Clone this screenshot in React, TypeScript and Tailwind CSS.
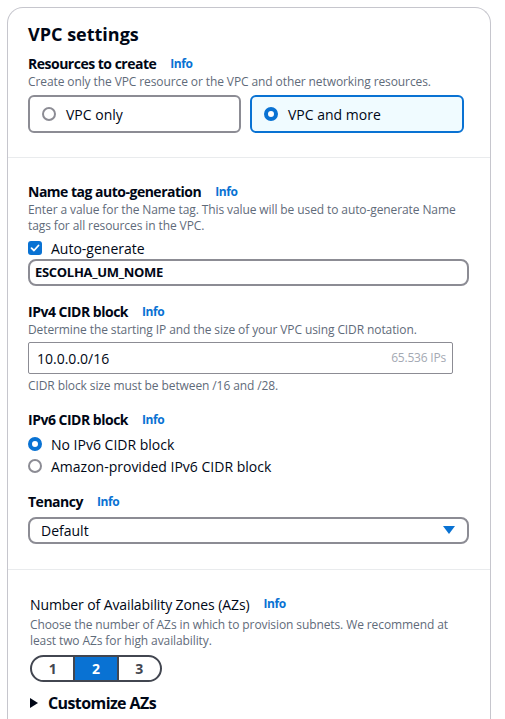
import React from 'react';

const FONT = { fontFamily: '"Open Sans", "Noto Sans", Arial, sans-serif' };

function Info() {
  return <span className="ml-[14px] text-[12px] font-bold tracking-[-0.4px] text-[#0972d3]">Info</span>;
}

function Label({ children }: { children: React.ReactNode }) {
  return (
    <div className="flex items-center h-5 text-[14px] font-bold tracking-[-0.5px] leading-5 text-[#000716]">
      {children}
      <Info />
    </div>
  );
}

function Desc({ children }: { children: React.ReactNode }) {
  return <div className="text-[12px] leading-4 tracking-[-0.1px] text-[#5f6b7a]">{children}</div>;
}

function Radio({ checked }: { checked?: boolean }) {
  return checked ? (
    <span className="block w-[14px] h-[14px] rounded-full border-[4px] border-[#0972d3] bg-white shrink-0" />
  ) : (
    <span className="block w-[14px] h-[14px] rounded-full border-2 border-[#8c8c94] bg-white shrink-0" />
  );
}

function RadioRow({ checked, label }: { checked?: boolean; label: string }) {
  return (
    <div className="flex items-center gap-[9px] h-5 text-[14px] text-[#000716]">
      <Radio checked={checked} />
      {label}
    </div>
  );
}

export default function App() {
  return (
    <div className="min-h-screen bg-white pl-[7px] pt-[7px] overflow-hidden" style={FONT}>
      <div className="w-[484px] h-[720px] border border-b-0 border-[#c6c6cd] rounded-t-2xl">
        {/* Header + resources */}
        <div className="px-5 pt-[14px] pb-6 border-b border-[#e9ebed]">
          <h2 className="text-[18px] font-bold leading-6 text-[#000716]">VPC settings</h2>
          <div className="mt-2">
            <Label>Resources to create</Label>
          </div>
          <Desc>Create only the VPC resource or the VPC and other networking resources.</Desc>
          <div className="mt-[5px] flex gap-[9px]">
            <div className="w-[213px] h-[38px] flex items-center gap-[10px] px-[12px] border-2 border-[#8c8c94] rounded-md text-[14px] text-[#000716]">
              <Radio />
              VPC only
            </div>
            <div className="w-[214px] h-[38px] flex items-center gap-[10px] px-[12px] border-2 border-[#0972d3] bg-[#f0fbff] rounded-md text-[14px] text-[#000716]">
              <Radio checked />
              VPC and more
            </div>
          </div>
        </div>

        {/* Main fields */}
        <div className="px-5 pt-6 pb-[25px] border-b border-[#e9ebed]">
          <Label>Name tag auto-generation</Label>
          <Desc>
            Enter a value for the Name tag. This value will be used to auto-generate Name
            <br />
            tags for all resources in the VPC.
          </Desc>
          <div className="mt-1 flex items-center gap-[9px] h-5 text-[14px] text-[#000716]">
            <span className="w-[14px] h-[14px] rounded-[3px] bg-[#0972d3] flex items-center justify-center">
              <svg width="10" height="10" viewBox="0 0 10 10" fill="none">
                <path d="M1.5 5.2 L4 7.5 L8.5 2.5" stroke="white" strokeWidth="1.8" strokeLinecap="round" strokeLinejoin="round" />
              </svg>
            </span>
            Auto-generate
          </div>
          <div className="mt-[1px] w-[441px] h-[27px] border-2 border-[#8c8c94] rounded-lg flex items-center px-[5px] text-[13px] font-bold tracking-[-0.3px] text-[#000716]">
            ESCOLHA_UM_NOME
          </div>

          <div className="mt-4">
            <Label>IPv4 CIDR block</Label>
          </div>
          <Desc>Determine the starting IP and the size of your VPC using CIDR notation.</Desc>
          <div className="mt-1 w-[425px] h-[32px] border border-[#8c8c94] rounded-[2px] flex items-center justify-between pl-[8px] pr-[6px]">
            <span className="text-[14px] text-[#000716]">10.0.0.0/16</span>
            <span className="text-[12px] tracking-[-0.2px] text-[#a4a9b3]">65.536 IPs</span>
          </div>
          <div className="mt-1">
            <Desc>CIDR block size must be between /16 and /28.</Desc>
          </div>

          <div className="mt-4">
            <Label>IPv6 CIDR block</Label>
          </div>
          <div className="mt-1 flex flex-col gap-[2px]">
            <RadioRow checked label="No IPv6 CIDR block" />
            <RadioRow label="Amazon-provided IPv6 CIDR block" />
          </div>

          <div className="mt-4">
            <Label>Tenancy</Label>
          </div>
          <div className="mt-[5px] w-[441px] h-[27px] border-2 border-[#8c8c94] rounded-lg flex items-center justify-between pl-[11px] pr-[12px] text-[14px] text-[#000716]">
            Default
            <svg width="12" height="9" viewBox="0 0 12 9">
              <path d="M0 0 H12 L6 8 Z" fill="#0972d3" />
            </svg>
          </div>
        </div>

        {/* AZs */}
        <div className="pl-[22px] pr-5 pt-6">
          <div className="flex items-center h-5 text-[14px] tracking-[-0.1px] text-[#000716]">
            Number of Availability Zones (AZs)
            <Info />
          </div>
          <div className="mt-[3px]">
            <Desc>
              Choose the number of AZs in which to provision subnets. We recommend at
              <br />
              least two AZs for high availability.
            </Desc>
          </div>
          <div className="mt-[6px] w-[132px] h-[27px] flex border-2 border-[#424650] rounded-full overflow-hidden text-[14px] font-bold">
            <div className="flex-1 flex items-center justify-center text-[#424650] border-r-2 border-[#424650]">1</div>
            <div className="flex-1 flex items-center justify-center bg-[#0972d3] text-white">2</div>
            <div className="flex-1 flex items-center justify-center text-[#424650] border-l-2 border-[#424650]">3</div>
          </div>
          <div className="mt-[10px] flex items-center gap-[10px] h-[22px] text-[16px] font-bold tracking-[-0.6px] text-[#000716]">
            <svg width="8" height="10" viewBox="0 0 8 10">
              <path d="M0 0 L8 5 L0 10 Z" fill="#000716" />
            </svg>
            Customize AZs
          </div>
        </div>
      </div>
    </div>
  );
}
